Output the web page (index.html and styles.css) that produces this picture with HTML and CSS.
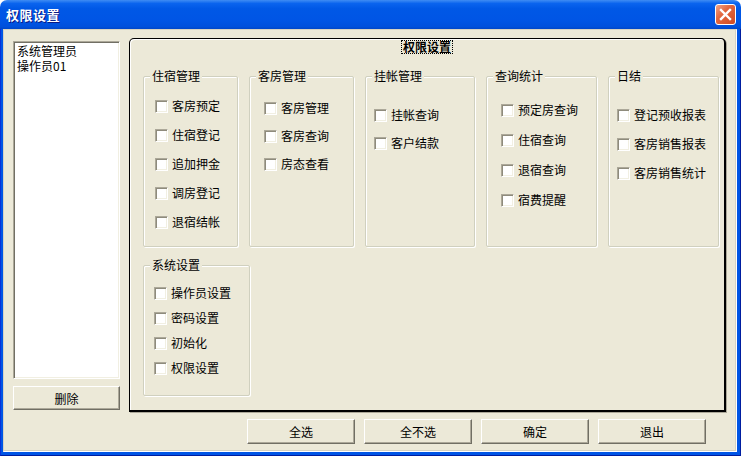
FILE: index.html
```html
<!DOCTYPE html>
<html>

<head>
    <link rel="stylesheet" href="styles.css">
</head>

<body>
    <div class="window">
        <div class="title_bar">
            <p class="title_text">权限设置</p>
            <div class="close_btn">
                <svg width="13" height="13" viewBox="0 0 13 13">
                    <path d="M2 2 L11 11 M11 2 L2 11" stroke="#fff" stroke-width="2.4" stroke-linecap="square" />
                </svg>
            </div>
        </div>
        <div class="frame">
            <div class="client">
                <div class="user_col">
                    <div class="user_list">
                        <p class="user_item">系统管理员</p>
                        <p class="user_item">操作员01</p>
                    </div>
                    <div class="btn btn_delete">删除</div>
                </div>

                <div class="panel">
                    <div class="panel_head">
                        <span class="panel_title">权限设置</span>
                    </div>
                    <div class="group_row">
                        <div class="group g_stay">
                            <p class="group_title">住宿管理</p>
                            <div class="rows">
                                <label class="row"><span class="check"></span>客房预定</label>
                                <label class="row"><span class="check"></span>住宿登记</label>
                                <label class="row"><span class="check"></span>追加押金</label>
                                <label class="row"><span class="check"></span>调房登记</label>
                                <label class="row"><span class="check"></span>退宿结帐</label>
                            </div>
                        </div>
                        <div class="group g_room">
                            <p class="group_title">客房管理</p>
                            <div class="rows">
                                <label class="row"><span class="check"></span>客房管理</label>
                                <label class="row"><span class="check"></span>客房查询</label>
                                <label class="row"><span class="check"></span>房态查看</label>
                            </div>
                        </div>
                        <div class="group g_bill">
                            <p class="group_title">挂帐管理</p>
                            <div class="rows">
                                <label class="row"><span class="check"></span>挂帐查询</label>
                                <label class="row"><span class="check"></span>客户结款</label>
                            </div>
                        </div>
                        <div class="group g_query">
                            <p class="group_title">查询统计</p>
                            <div class="rows">
                                <label class="row"><span class="check"></span>预定房查询</label>
                                <label class="row"><span class="check"></span>住宿查询</label>
                                <label class="row"><span class="check"></span>退宿查询</label>
                                <label class="row"><span class="check"></span>宿费提醒</label>
                            </div>
                        </div>
                        <div class="group g_day">
                            <p class="group_title">日结</p>
                            <div class="rows">
                                <label class="row"><span class="check"></span>登记预收报表</label>
                                <label class="row"><span class="check"></span>客房销售报表</label>
                                <label class="row"><span class="check"></span>客房销售统计</label>
                            </div>
                        </div>
                    </div>
                    <div class="group_row row_two">
                        <div class="group g_sys">
                            <p class="group_title">系统设置</p>
                            <div class="rows">
                                <label class="row"><span class="check"></span>操作员设置</label>
                                <label class="row"><span class="check"></span>密码设置</label>
                                <label class="row"><span class="check"></span>初始化</label>
                                <label class="row"><span class="check"></span>权限设置</label>
                            </div>
                        </div>
                    </div>
                </div>

                <div class="btn_row">
                    <div class="btn">全选</div>
                    <div class="btn">全不选</div>
                    <div class="btn">确定</div>
                    <div class="btn">退出</div>
                </div>
            </div>
        </div>
    </div>
</body>

</html>
```

FILE: styles.css
```css
* {
    box-sizing: border-box;
}

body {
    margin: 0;
    font-family: "Noto Sans CJK SC", "Liberation Sans", sans-serif;
    font-size: 12px;
    color: #000;
}

p {
    margin: 0;
}

.window {
    width: 741px;
    height: 456px;
    display: flex;
    flex-direction: column;
    overflow: hidden;
}

.title_bar {
    height: 29px;
    display: flex;
    align-items: center;
    justify-content: space-between;
    padding: 0 5px 0 6px;
    border-radius: 7px 7px 0 0;
    background: linear-gradient(#3f8cf3 0%, #0a64ee 12%, #0058e6 30%, #0055e5 70%, #0050dc 92%, #0046c8 100%);
}

.title_text {
    color: #fff;
    font-size: 13px;
    font-weight: bold;
    text-shadow: 1px 1px #0a1883;
    letter-spacing: 0.5px;
}

.close_btn {
    width: 21px;
    height: 21px;
    border: 1px solid #fff;
    border-radius: 3px;
    background: linear-gradient(135deg, #f0a488 0%, #e2673f 40%, #d24a22 100%);
    display: flex;
    align-items: center;
    justify-content: center;
}

.frame {
    flex: 1;
    background: #0055e5;
    padding: 0 3px 3px 2px;
    border-left: 1px solid #0831d9;
    border-right: 1px solid #001ea0;
    border-bottom: 1px solid #001ea0;
}

.client {
    height: 100%;
    background: #ece9d8;
    border: 1px solid;
    border-color: #d6d2c2 #fff #fff #d6d2c2;
    box-shadow: inset -1px -1px #d6d2c2;
    padding: 8px 0 0 9px;
    display: grid;
    grid-template-columns: 107px 597px;
    grid-template-rows: 374px 25px;
    column-gap: 9px;
    row-gap: 7px;
}

/* left column */
.user_col {
    margin-top: 3px;
}

.user_list {
    height: 338px;
    background: #fff;
    border: 1px solid;
    border-color: #aca899 #fff #fff #aca899;
    box-shadow: inset 1px 1px #716f64, inset -1px -1px #f1efe2;
    padding: 1px 3px 0;
}

.user_item {
    line-height: 15px;
}

.btn {
    height: 25px;
    background: #ece9d8;
    border: 1px solid;
    border-color: #fff #716f64 #716f64 #fff;
    box-shadow: inset -1px -1px #aca899;
    display: flex;
    align-items: center;
    justify-content: center;
    font-size: 12px;
}

.btn_delete {
    margin-top: 7px;
    height: 24px;
}

/* right panel */
.panel {
    height: 374px;
    border: 1px solid #000;
    border-right-width: 2px;
    border-bottom-width: 2px;
    border-radius: 5px 5px 0 0;
    box-shadow: inset 1px 1px #fff, 1px 1px #aca899;
    padding: 1px 0 0 13px;
}

.panel_head {
    display: flex;
    justify-content: center;
    padding-right: 13px;
}

.panel_title {
    font-weight: bold;
    line-height: 12px;
    border: 1px dotted #000;
    padding: 0 1px;
}

.group_row {
    display: flex;
    gap: 11px;
    margin-top: 22px;
}

.row_two {
    margin-top: 18px;
}

.group {
    height: 171px;
    border: 1px solid #d0d0bf;
    box-shadow: inset 1px 1px #fff, 1px 1px #fff;
    border-radius: 2px;
}

.group_title {
    display: table;
    margin: -8px 0 0 6px;
    padding: 0 2px;
    line-height: 14px;
    background: #ece9d8;
}

.rows {
    display: flex;
    flex-direction: column;
}

.row {
    display: flex;
    align-items: center;
    height: 14px;
    line-height: 14px;
    white-space: nowrap;
}

.check {
    width: 13px;
    height: 13px;
    margin-right: 4px;
    flex: none;
    background: #fff;
    border: 1px solid;
    border-color: #aca899 #fff #fff #aca899;
    box-shadow: inset 1px 1px #8e8b7c, inset -1px -1px #f1efe2;
}

.g_stay {
    width: 95px;
}

.g_stay .rows {
    padding: 16px 0 0 11px;
    gap: 15px;
}

.g_room {
    width: 105px;
}

.g_room .rows {
    padding: 18px 0 0 14px;
    gap: 14px;
}

.g_bill {
    width: 110px;
}

.g_bill .rows {
    padding: 25px 0 0 8px;
    gap: 14px;
}

.g_query {
    width: 111px;
}

.g_query .rows {
    padding: 20px 0 0 14px;
    gap: 16px;
}

.g_day {
    width: 111px;
}

.g_day .rows {
    padding: 25px 0 0 8px;
    gap: 15px;
}

.g_sys {
    width: 107px;
    height: 131px;
}

.g_sys .rows {
    padding: 14px 0 0 10px;
    gap: 11px;
}

/* bottom buttons */
.btn_row {
    grid-column: 2;
    display: flex;
    gap: 9px;
    padding-left: 118px;
}

.btn_row .btn {
    width: 108px;
}
```
